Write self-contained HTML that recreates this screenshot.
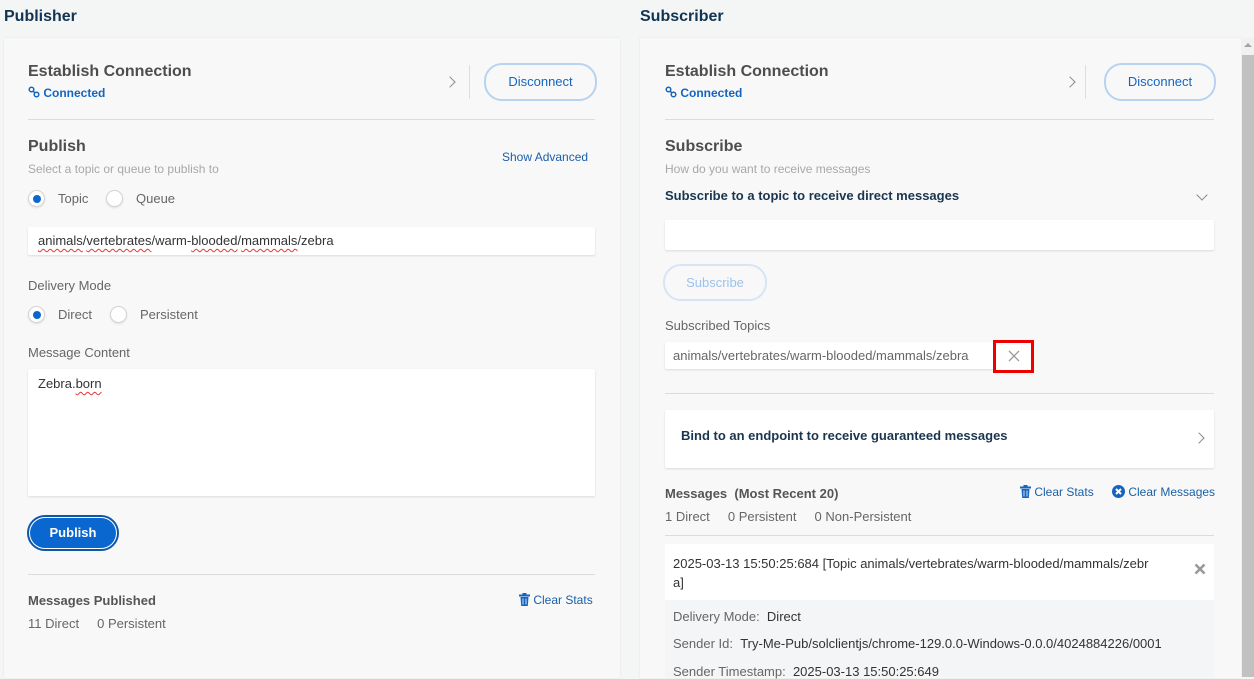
<!DOCTYPE html>
<html><head><meta charset="utf-8">
<style>
*{box-sizing:border-box;margin:0;padding:0}
body{width:1254px;height:677px;overflow:hidden;background:#f4f5f5;font-family:"Liberation Sans",sans-serif;font-size:13px;color:#555;position:relative}
.a{position:absolute;white-space:nowrap}
.h1{font-size:16px;font-weight:bold;color:#113452}
.panel{position:absolute;background:#f8f8f8;box-shadow:0 0 2px rgba(0,0,0,.08)}
.t{font-size:16px;font-weight:bold;color:#4d4d4d}
.conn{font-size:12px;font-weight:bold;color:#1565c0}
.sub{font-size:12px;color:#a8a8a8}
.lbl{font-size:13px;color:#666}
.link{font-size:12px;color:#1a5fa8}
.hr{position:absolute;height:1px;background:#dcdcdc}
.btn{position:absolute;border:2px solid #b7d3f0;border-radius:18px;color:#1565c0;font-size:13px;text-align:center;background:#f8f8f8}
.inp{position:absolute;background:#fff;border-radius:2px;box-shadow:0 1px 2px rgba(0,0,0,.12)}
.rad{position:absolute;width:17px;height:17px;border-radius:50%;background:#fff;border:1px solid #d4d4d4;box-shadow:0 1px 2px rgba(0,0,0,.1)}
.rad.on::after{content:"";position:absolute;left:3.5px;top:3.5px;width:8px;height:8px;border-radius:50%;background:#0b67d0}
.sq{text-decoration:underline wavy #e33;text-decoration-thickness:1px;text-underline-offset:3px}
.chev{position:absolute;width:8px;height:8px;border-right:1.5px solid #888;border-top:1.5px solid #888;transform:rotate(45deg)}
.sb{position:absolute;z-index:5}
</style></head><body>
<div class="a h1" style="left:4px;top:8px">Publisher</div>
<div class="a h1" style="left:640px;top:8px">Subscriber</div>

<div class="panel" style="left:4px;top:38px;width:616px;height:640px"></div>
<div class="a t" style="left:28px;top:63px">Establish Connection</div>
<div class="a conn" style="left:28px;top:86px"><svg width="12" height="12" viewBox="0 0 12 12" style="vertical-align:-1px"><circle cx="3.5" cy="3.5" r="2.3" fill="none" stroke="#1565c0" stroke-width="1.5"/><circle cx="8.5" cy="8.5" r="2.3" fill="none" stroke="#1565c0" stroke-width="1.5"/><path d="M5 5l2 2" stroke="#1565c0" stroke-width="1.5"/></svg> Connected</div>
<div class="chev" style="left:446px;top:78px"></div>
<div class="a" style="left:469px;top:65px;width:1px;height:34px;background:#ddd"></div>
<div class="btn" style="left:484px;top:63px;width:113px;height:38px;line-height:34px">Disconnect</div>
<div class="hr" style="left:28px;top:119px;width:567px"></div>

<div class="a t" style="left:28px;top:138px">Publish</div>
<div class="a sub" style="left:28px;top:162px">Select a topic or queue to publish to</div>
<div class="a link" style="left:502px;top:150px">Show Advanced</div>
<div class="rad on" style="left:28px;top:190px"></div><div class="a lbl" style="left:58px;top:191px">Topic</div>
<div class="rad" style="left:106px;top:190px"></div><div class="a lbl" style="left:136px;top:191px">Queue</div>
<div class="inp" style="left:28px;top:227px;width:567px;height:28px"></div>
<div class="a" style="left:38px;top:233px;color:#333;font-size:13px"><span class="sq">animals</span>/<span class="sq">vertebrates</span>/warm-<span class="sq">blooded</span>/<span class="sq">mammals</span>/zebra</div>
<div class="a lbl" style="left:28px;top:278px">Delivery Mode</div>
<div class="rad on" style="left:28px;top:306px"></div><div class="a lbl" style="left:58px;top:307px">Direct</div>
<div class="rad" style="left:110px;top:306px"></div><div class="a lbl" style="left:140px;top:307px">Persistent</div>
<div class="a lbl" style="left:28px;top:345px">Message Content</div>
<div class="inp" style="left:28px;top:369px;width:567px;height:127px"></div>
<div class="a" style="left:38px;top:376px;color:#333">Zebra.<span class="sq">born</span></div>
<div class="a" style="left:27px;top:515px;width:92px;height:36px;border-radius:18px;border:2px solid #0d57a8;background:#fff"></div>
<div class="a" style="left:30px;top:518px;width:86px;height:30px;border-radius:15px;background:#0b67d0;color:#fff;font-weight:bold;text-align:center;line-height:30px">Publish</div>
<div class="hr" style="left:28px;top:574px;width:567px"></div>
<div class="a" style="left:28px;top:593px;font-weight:bold;color:#555">Messages Published</div>
<div class="a link" style="left:519px;top:593px"><svg width="11" height="13" viewBox="0 0 11 13" style="vertical-align:-2px"><rect x="0" y="1.5" width="11" height="2" fill="#1565c0"/><rect x="3.5" y="0" width="4" height="2" fill="#1565c0"/><path d="M1.5 4h8l-.7 9H2.2z" fill="#1565c0"/><path d="M4 5.5v6M7 5.5v6" stroke="#fff" stroke-width=".8"/></svg> Clear Stats</div>
<div class="a lbl" style="left:28px;top:616px">11 Direct &nbsp;&nbsp;&nbsp; 0 Persistent</div>

<div class="panel" style="left:640px;top:38px;width:601px;height:640px"></div>
<div class="sb" style="left:1241px;top:38px;width:13px;height:639px;background:#f1f1f1"></div>
<div class="sb" style="left:1242px;top:55px;width:12px;height:622px;background:#c1c1c1"></div>
<div class="sb" style="left:1244px;top:43px;width:0;height:0;border-left:4px solid transparent;border-right:4px solid transparent;border-bottom:4px solid #a3a3a3"></div>

<div class="a t" style="left:665px;top:63px">Establish Connection</div>
<div class="a conn" style="left:665px;top:86px"><svg width="12" height="12" viewBox="0 0 12 12" style="vertical-align:-1px"><circle cx="3.5" cy="3.5" r="2.3" fill="none" stroke="#1565c0" stroke-width="1.5"/><circle cx="8.5" cy="8.5" r="2.3" fill="none" stroke="#1565c0" stroke-width="1.5"/><path d="M5 5l2 2" stroke="#1565c0" stroke-width="1.5"/></svg> Connected</div>
<div class="chev" style="left:1066px;top:78px"></div>
<div class="a" style="left:1085px;top:65px;width:1px;height:34px;background:#ddd"></div>
<div class="btn" style="left:1104px;top:63px;width:112px;height:38px;line-height:34px">Disconnect</div>
<div class="hr" style="left:665px;top:119px;width:549px"></div>
<div class="a t" style="left:665px;top:138px">Subscribe</div>
<div class="a sub" style="left:665px;top:162px">How do you want to receive messages</div>
<div class="a" style="left:665px;top:188px;font-weight:bold;color:#1b3550">Subscribe to a topic to receive direct messages</div>
<div class="chev" style="left:1198px;top:191px;transform:rotate(135deg)"></div>
<div class="inp" style="left:665px;top:220px;width:549px;height:30px"></div>
<div class="btn" style="left:663px;top:264px;width:104px;height:37px;line-height:33px;color:#9cc2ec;border-color:#d6e5f5">Subscribe</div>
<div class="a lbl" style="left:665px;top:318px">Subscribed Topics</div>
<div class="inp" style="left:665px;top:342px;width:337px;height:27px"></div>
<div class="a" style="left:673px;top:348px;color:#666">animals/vertebrates/warm-blooded/mammals/zebra</div>
<div class="a" style="left:993px;top:340px;width:41px;height:33px;border:3px solid #e00;background:#fff"><svg width="35" height="27" viewBox="0 0 35 27"><path d="M13 8l10 10M23 8L13 18" stroke="#999" stroke-width="1.3"/></svg></div>
<div class="hr" style="left:665px;top:393px;width:549px"></div>
<div class="inp" style="left:665px;top:410px;width:549px;height:58px"></div>
<div class="a" style="left:681px;top:428px;font-weight:bold;color:#1b3550">Bind to an endpoint to receive guaranteed messages</div>
<div class="chev" style="left:1195px;top:434px"></div>
<div class="a" style="left:665px;top:486px;font-weight:bold;color:#555">Messages &nbsp;(Most Recent 20)</div>
<div class="a link" style="left:1020px;top:485px"><svg width="11" height="13" viewBox="0 0 11 13" style="vertical-align:-2px"><rect x="0" y="1.5" width="11" height="2" fill="#1565c0"/><rect x="3.5" y="0" width="4" height="2" fill="#1565c0"/><path d="M1.5 4h8l-.7 9H2.2z" fill="#1565c0"/><path d="M4 5.5v6M7 5.5v6" stroke="#fff" stroke-width=".8"/></svg> Clear Stats</div>
<div class="a link" style="left:1112px;top:485px"><svg width="13" height="13" viewBox="0 0 13 13" style="vertical-align:-2px"><circle cx="6.5" cy="6.5" r="6.5" fill="#1565c0"/><path d="M4 4l5 5M9 4L4 9" stroke="#fff" stroke-width="2"/></svg> Clear Messages</div>
<div class="a lbl" style="left:665px;top:509px">1 Direct &nbsp;&nbsp;&nbsp; 0 Persistent &nbsp;&nbsp;&nbsp; 0 Non-Persistent</div>
<div class="hr" style="left:665px;top:535px;width:549px"></div>
<div class="a" style="left:665px;top:544px;width:549px;height:56px;background:#fff"></div>
<div class="a" style="left:665px;top:600px;width:549px;height:77px;background:#f4f5f7"></div>
<div class="a" style="left:673px;top:554px;color:#333;line-height:19px">2025-03-13 15:50:25:684 [Topic animals/vertebrates/warm-blooded/mammals/zebr<br>a]</div>
<div class="a" style="left:1194px;top:563px"><svg width="12" height="12" viewBox="0 0 12 12"><path d="M1.5 1.5l9 9M10.5 1.5l-9 9" stroke="#999" stroke-width="2.6"/></svg></div>
<div class="a lbl" style="left:673px;top:609px">Delivery Mode: &nbsp;<span style="color:#333">Direct</span></div>
<div class="a lbl" style="left:673px;top:636px">Sender Id: &nbsp;<span style="color:#333">Try-Me-Pub/solclientjs/chrome-129.0.0-Windows-0.0.0/4024884226/0001</span></div>
<div class="a lbl" style="left:673px;top:664px">Sender Timestamp: &nbsp;<span style="color:#333">2025-03-13 15:50:25:649</span></div>
</body></html>
